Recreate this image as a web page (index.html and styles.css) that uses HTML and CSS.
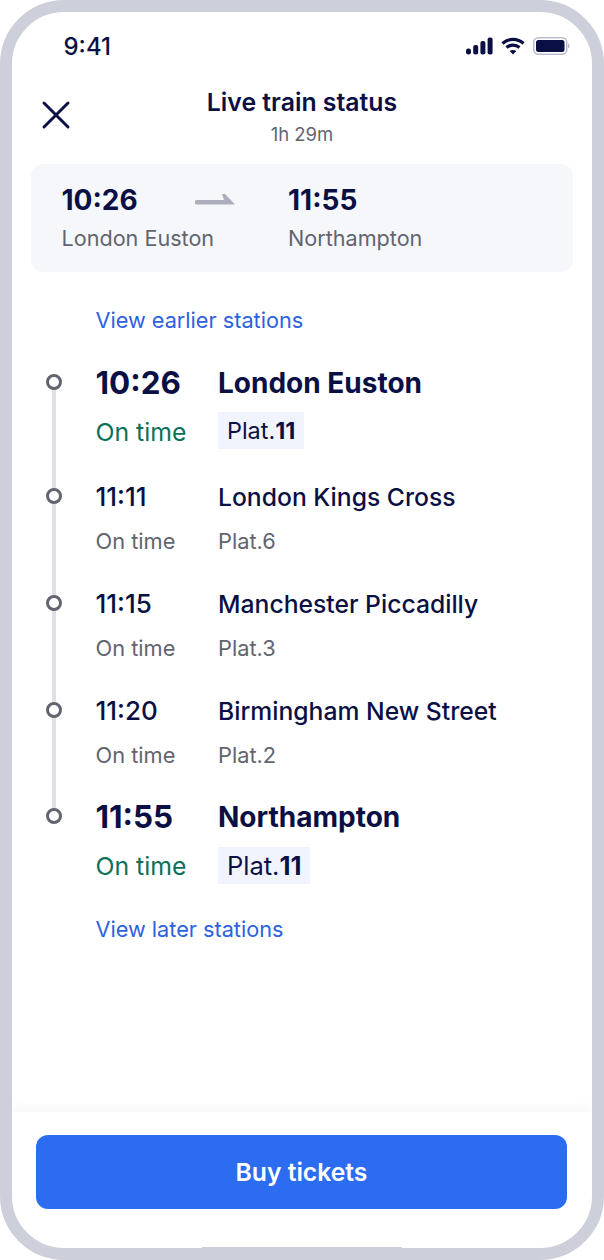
FILE: index.html
```html
<!DOCTYPE html>
<html lang="en">
<head>
  <meta charset="UTF-8" />
  <meta name="viewport" content="width=device-width, initial-scale=1.0"/>
  <title>Live train status</title>
  <link rel="stylesheet" href="styles.css">
</head>
<body>
  <div class="phone">
    <div class="status-bar">
      <span class="clock">9:41</span>
      <div class="status-icons">
        <svg width="27" height="18" viewBox="0 0 27 18" fill="#0b1044">
          <rect x="0" y="11.5" width="5" height="6" rx="2.2"/>
          <rect x="7.2" y="8" width="5" height="9.5" rx="2"/>
          <rect x="14.4" y="4" width="5" height="13.5" rx="2"/>
          <rect x="21.6" y="0.5" width="5" height="17" rx="2"/>
        </svg>
        <svg width="24" height="18" viewBox="0 0 24 18" fill="none" stroke="#0b1044" stroke-width="3.2">
          <path d="M1.5 6.5C7.5 1 16.5 1 22.5 6.5"/>
          <path d="M5.5 10.5C9.3 7.2 14.7 7.2 18.5 10.5"/>
          <path d="M12 17.5L8.6 14C10.5 12.5 13.5 12.5 15.4 14Z" fill="#0b1044" stroke="none"/>
        </svg>
        <svg width="37" height="18" viewBox="0 0 37 18" fill="none">
          <rect x="0.75" y="0.75" width="33" height="16.5" rx="4.5" stroke="#b9bccb" stroke-width="1.5"/>
          <rect x="3" y="3" width="28.5" height="12" rx="2.5" fill="#0b1044"/>
          <path d="M35 6.5c1.2.4 1.6 1.4 1.6 2.5s-.4 2.1-1.6 2.5z" fill="#b9bccb"/>
        </svg>
      </div>
    </div>

    <header class="top-bar">
      <svg class="close" width="30" height="30" viewBox="0 0 30 30" fill="none" stroke="#0b1044" stroke-width="3" stroke-linecap="round">
        <path d="M3 3L27 27M27 3L3 27"/>
      </svg>
      <h1>Live train status</h1>
      <p>1h 29m</p>
    </header>

    <section class="summary">
      <div class="end">
        <strong>10:26</strong>
        <span>London Euston</span>
      </div>
      <svg class="arrow" width="40" height="12" viewBox="0 0 40 12" fill="#acafbb">
        <path d="M2 6H29L27 0H30L40 10.5H2A2.2 2.2 0 0 1 2 6Z"/>
      </svg>
      <div class="end">
        <strong>11:55</strong>
        <span>Northampton</span>
      </div>
    </section>

    <a class="more earlier">View earlier stations</a>

    <ol class="stops">
      <li class="stop main">
        <i class="dot"></i>
        <span class="time">10:26</span>
        <span class="name">London Euston</span>
        <span class="state">On time</span>
        <span class="plat">Plat.<b>11</b></span>
      </li>
      <li class="stop">
        <i class="dot"></i>
        <span class="time">11:11</span>
        <span class="name">London Kings Cross</span>
        <span class="state">On time</span>
        <span class="plat">Plat.6</span>
      </li>
      <li class="stop">
        <i class="dot"></i>
        <span class="time">11:15</span>
        <span class="name">Manchester Piccadilly</span>
        <span class="state">On time</span>
        <span class="plat">Plat.3</span>
      </li>
      <li class="stop stop-short">
        <i class="dot"></i>
        <span class="time">11:20</span>
        <span class="name">Birmingham New Street</span>
        <span class="state">On time</span>
        <span class="plat">Plat.2</span>
      </li>
      <li class="stop main last">
        <i class="dot"></i>
        <span class="time">11:55</span>
        <span class="name">Northampton</span>
        <span class="state">On time</span>
        <span class="plat">Plat.<b>11</b></span>
      </li>
    </ol>

    <a class="more later">View later stations</a>

    <footer class="footer">
      <button>Buy tickets</button>
    </footer>
    <div class="home-bar"></div>
  </div>
</body>
</html>
```

FILE: styles.css
```css
* {
  box-sizing: border-box;
}

body {
  margin: 0;
  background: #fff;
  font-family: Inter, "Liberation Sans", sans-serif;
  color: #0b1044;
}

.phone {
  position: relative;
  display: flex;
  flex-direction: column;
  width: 604px;
  height: 1260px;
  border: 12px solid #cdd0db;
  border-radius: 64px;
  overflow: hidden;
}

.status-bar {
  display: flex;
  justify-content: space-between;
  align-items: center;
  height: 44px;
  padding: 24px 22px 0 51.5px;
}

.clock {
  font-size: 24px;
  font-weight: 500;
}

.status-icons {
  display: flex;
  align-items: center;
  gap: 8px;
}

.top-bar {
  position: relative;
  height: 108px;
  padding-top: 31px;
  text-align: center;
}

.top-bar h1 {
  margin: 0;
  font-size: 24.8px;
  line-height: 30px;
  font-weight: 600;
}

.top-bar p {
  margin: 5px 0 0;
  font-size: 18.5px;
  line-height: 24px;
  color: #62646f;
}

.close {
  position: absolute;
  left: 29px;
  top: 44px;
}

.summary {
  display: flex;
  align-items: flex-start;
  height: 108px;
  margin: 0 19px;
  padding: 18px 30.5px;
  background: #f6f7fb;
  border-radius: 12px;
}

.end {
  flex: none;
  white-space: nowrap;
}

.end strong {
  display: block;
  font-size: 28px;
  line-height: 36px;
  font-weight: 700;
}

.end span {
  display: block;
  margin-top: 5px;
  font-size: 21.6px;
  line-height: 30px;
  color: #62646f;
}

.arrow {
  flex: none;
  margin-top: 12px;
}

.summary .end:first-child {
  width: 133.5px;
}

.summary .end:last-child {
  margin-left: 53px;
}

.more {
  display: block;
  padding-left: 83.5px;
  font-size: 21.7px;
  line-height: 30px;
  color: #2c62e0;
}

.earlier {
  margin-top: 33px;
}

.later {
  margin-top: 27px;
}

.stops {
  position: relative;
  list-style: none;
  margin: 32px 0 0;
  padding: 0;
}

.stops::before {
  content: "";
  position: absolute;
  left: 40px;
  top: 16px;
  bottom: 72px;
  width: 4px;
  background: #dfe0e6;
}

.stop {
  position: relative;
  display: grid;
  grid-template-columns: 122.5px 1fr;
  align-content: start;
  height: 107px;
  padding-left: 83.5px;
}

.stop-short {
  height: 106px;
}

.stop.main:first-child {
  height: 114px;
}

.stop.last {
  height: auto;
}

.dot {
  position: absolute;
  left: 34px;
  top: 7px;
  width: 16px;
  height: 16px;
  background: #fff;
  border: 3.5px solid #62646f;
  border-radius: 50%;
}

.time,
.name {
  font-size: 24.7px;
  line-height: 32px;
  font-weight: 500;
}

.time {
  font-size: 26px;
}

.state,
.plat {
  margin-top: 13px;
  font-size: 21.8px;
  line-height: 30px;
  color: #62646f;
}

.main .time {
  font-size: 31.4px;
  font-weight: 700;
}

.main .name {
  font-size: 28px;
  font-weight: 700;
}

.main .state {
  margin-top: 13px;
  font-size: 24.8px;
  line-height: 41px;
  color: #0c7158;
}

.main .plat {
  justify-self: start;
  align-self: start;
  margin-top: 13px;
  padding: 0 9px;
  font-size: 23.4px;
  line-height: 37px;
  color: #0b1044;
  background: #f1f4fd;
}

.main.last .plat {
  margin-top: 14px;
  font-size: 25.5px;
}

.footer {
  position: absolute;
  left: 0;
  right: 0;
  bottom: 0;
  height: 136px;
  padding: 23px 25px 0 24px;
  box-shadow: 0 -6px 8px rgba(205, 208, 219, 0.12);
}

.footer button {
  display: block;
  width: 100%;
  height: 74px;
  background: #2c6cf0;
  border: none;
  border-radius: 12px;
  color: #fff;
  font-family: inherit;
  font-size: 24.7px;
  font-weight: 600;
}

.home-bar {
  position: absolute;
  left: 190px;
  bottom: -1px;
  width: 200px;
  height: 2px;
  background: #cdd0db;
}
```
